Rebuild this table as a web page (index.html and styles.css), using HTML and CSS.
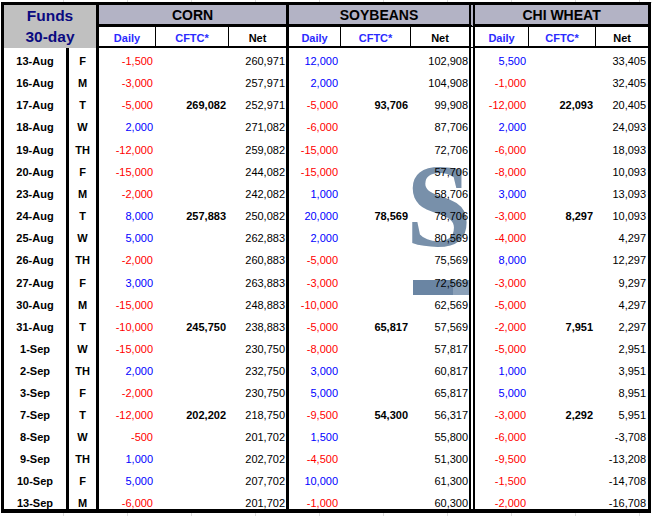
FILE: index.html
```html
<!DOCTYPE html>
<html>
<head>
<meta charset="utf-8">
<title>Funds 30-day</title>
<link rel="stylesheet" href="styles.css">
</head>
<body>
<div class="sheet">
  <div class="mark" aria-hidden="true"><span class="mark-s">S</span><span class="mark-bar"></span></div>
  <table class="funds">
    <colgroup>
      <col class="c-date"><col class="c-day">
      <col class="c-corn-d"><col class="c-corn-c"><col class="c-corn-n">
      <col class="c-soy-d"><col class="c-soy-c"><col class="c-soy-n">
      <col class="c-wh-d"><col class="c-wh-c"><col class="c-wh-n">
    </colgroup>
    <thead>
      <tr class="r-group">
        <th class="title" rowspan="2" colspan="2">Funds<br>30-day</th>
        <th class="grp end-corn" colspan="3">CORN</th>
        <th class="grp end-soy" colspan="3">SOYBEANS</th>
        <th class="grp" colspan="3">CHI WHEAT</th>
      </tr>
      <tr class="r-sub">
        <th class="sub blue sep">Daily</th><th class="sub blue sep">CFTC*</th><th class="sub end-corn">Net</th>
        <th class="sub blue sep">Daily</th><th class="sub blue sep">CFTC*</th><th class="sub end-soy">Net</th>
        <th class="sub blue sep">Daily</th><th class="sub blue sep">CFTC*</th><th class="sub">Net</th>
      </tr>
    </thead>
    <tbody>
      <tr><td class="date">13-Aug</td><td class="day">F</td><td class="d neg">-1,500</td><td class="c"></td><td class="n end-corn">260,971</td><td class="d pos">12,000</td><td class="c"></td><td class="n end-soy">102,908</td><td class="d pos">5,500</td><td class="c"></td><td class="n wn">33,405</td></tr>
      <tr><td class="date">16-Aug</td><td class="day">M</td><td class="d neg">-3,000</td><td class="c"></td><td class="n end-corn">257,971</td><td class="d pos">2,000</td><td class="c"></td><td class="n end-soy">104,908</td><td class="d neg">-1,000</td><td class="c"></td><td class="n wn">32,405</td></tr>
      <tr><td class="date">17-Aug</td><td class="day">T</td><td class="d neg">-5,000</td><td class="c">269,082</td><td class="n end-corn">252,971</td><td class="d neg">-5,000</td><td class="c">93,706</td><td class="n end-soy">99,908</td><td class="d neg">-12,000</td><td class="c">22,093</td><td class="n wn">20,405</td></tr>
      <tr><td class="date">18-Aug</td><td class="day">W</td><td class="d pos">2,000</td><td class="c"></td><td class="n end-corn">271,082</td><td class="d neg">-6,000</td><td class="c"></td><td class="n end-soy">87,706</td><td class="d pos">2,000</td><td class="c"></td><td class="n wn">24,093</td></tr>
      <tr class="tall"><td class="date">19-Aug</td><td class="day">TH</td><td class="d neg">-12,000</td><td class="c"></td><td class="n end-corn">259,082</td><td class="d neg">-15,000</td><td class="c"></td><td class="n end-soy">72,706</td><td class="d neg">-6,000</td><td class="c"></td><td class="n wn">18,093</td></tr>
      <tr><td class="date">20-Aug</td><td class="day">F</td><td class="d neg">-15,000</td><td class="c"></td><td class="n end-corn">244,082</td><td class="d neg">-15,000</td><td class="c"></td><td class="n end-soy">57,706</td><td class="d neg">-8,000</td><td class="c"></td><td class="n wn">10,093</td></tr>
      <tr><td class="date">23-Aug</td><td class="day">M</td><td class="d neg">-2,000</td><td class="c"></td><td class="n end-corn">242,082</td><td class="d pos">1,000</td><td class="c"></td><td class="n end-soy">58,706</td><td class="d pos">3,000</td><td class="c"></td><td class="n wn">13,093</td></tr>
      <tr><td class="date">24-Aug</td><td class="day">T</td><td class="d pos">8,000</td><td class="c">257,883</td><td class="n end-corn">250,082</td><td class="d pos">20,000</td><td class="c">78,569</td><td class="n end-soy">78,706</td><td class="d neg">-3,000</td><td class="c">8,297</td><td class="n wn">10,093</td></tr>
      <tr><td class="date">25-Aug</td><td class="day">W</td><td class="d pos">5,000</td><td class="c"></td><td class="n end-corn">262,883</td><td class="d pos">2,000</td><td class="c"></td><td class="n end-soy">80,569</td><td class="d neg">-4,000</td><td class="c"></td><td class="n wn">4,297</td></tr>
      <tr><td class="date">26-Aug</td><td class="day">TH</td><td class="d neg">-2,000</td><td class="c"></td><td class="n end-corn">260,883</td><td class="d neg">-5,000</td><td class="c"></td><td class="n end-soy">75,569</td><td class="d pos">8,000</td><td class="c"></td><td class="n wn">12,297</td></tr>
      <tr class="tall"><td class="date">27-Aug</td><td class="day">F</td><td class="d pos">3,000</td><td class="c"></td><td class="n end-corn">263,883</td><td class="d neg">-3,000</td><td class="c"></td><td class="n end-soy">72,569</td><td class="d neg">-3,000</td><td class="c"></td><td class="n wn">9,297</td></tr>
      <tr><td class="date">30-Aug</td><td class="day">M</td><td class="d neg">-15,000</td><td class="c"></td><td class="n end-corn">248,883</td><td class="d neg">-10,000</td><td class="c"></td><td class="n end-soy">62,569</td><td class="d neg">-5,000</td><td class="c"></td><td class="n wn">4,297</td></tr>
      <tr><td class="date">31-Aug</td><td class="day">T</td><td class="d neg">-10,000</td><td class="c">245,750</td><td class="n end-corn">238,883</td><td class="d neg">-5,000</td><td class="c">65,817</td><td class="n end-soy">57,569</td><td class="d neg">-2,000</td><td class="c">7,951</td><td class="n wn">2,297</td></tr>
      <tr><td class="date">1-Sep</td><td class="day">W</td><td class="d neg">-15,000</td><td class="c"></td><td class="n end-corn">230,750</td><td class="d neg">-8,000</td><td class="c"></td><td class="n end-soy">57,817</td><td class="d neg">-5,000</td><td class="c"></td><td class="n wn">2,951</td></tr>
      <tr><td class="date">2-Sep</td><td class="day">TH</td><td class="d pos">2,000</td><td class="c"></td><td class="n end-corn">232,750</td><td class="d pos">3,000</td><td class="c"></td><td class="n end-soy">60,817</td><td class="d pos">1,000</td><td class="c"></td><td class="n wn">3,951</td></tr>
      <tr><td class="date">3-Sep</td><td class="day">F</td><td class="d neg">-2,000</td><td class="c"></td><td class="n end-corn">230,750</td><td class="d pos">5,000</td><td class="c"></td><td class="n end-soy">65,817</td><td class="d pos">5,000</td><td class="c"></td><td class="n wn">8,951</td></tr>
      <tr><td class="date">7-Sep</td><td class="day">T</td><td class="d neg">-12,000</td><td class="c">202,202</td><td class="n end-corn">218,750</td><td class="d neg">-9,500</td><td class="c">54,300</td><td class="n end-soy">56,317</td><td class="d neg">-3,000</td><td class="c">2,292</td><td class="n wn">5,951</td></tr>
      <tr><td class="date">8-Sep</td><td class="day">W</td><td class="d neg">-500</td><td class="c"></td><td class="n end-corn">201,702</td><td class="d pos">1,500</td><td class="c"></td><td class="n end-soy">55,800</td><td class="d neg">-6,000</td><td class="c"></td><td class="n wn">-3,708</td></tr>
      <tr><td class="date">9-Sep</td><td class="day">TH</td><td class="d pos">1,000</td><td class="c"></td><td class="n end-corn">202,702</td><td class="d neg">-4,500</td><td class="c"></td><td class="n end-soy">51,300</td><td class="d neg">-9,500</td><td class="c"></td><td class="n wn">-13,208</td></tr>
      <tr><td class="date">10-Sep</td><td class="day">F</td><td class="d pos">5,000</td><td class="c"></td><td class="n end-corn">207,702</td><td class="d pos">10,000</td><td class="c"></td><td class="n end-soy">61,300</td><td class="d neg">-1,500</td><td class="c"></td><td class="n wn">-14,708</td></tr>
      <tr class="last"><td class="date">13-Sep</td><td class="day">M</td><td class="d neg">-6,000</td><td class="c"></td><td class="n end-corn">201,702</td><td class="d neg">-1,000</td><td class="c"></td><td class="n end-soy">60,300</td><td class="d neg">-2,000</td><td class="c"></td><td class="n wn">-16,708</td></tr>
    </tbody>
  </table>
</div>
</body>
</html>
```

FILE: styles.css
```css
html, body {
  margin: 0;
  padding: 0;
  height: 100%;
}

body {
  background-color: #ffffff;
  background-image:
    linear-gradient(#d6d6d6, #d6d6d6),
    repeating-linear-gradient(to right, transparent 0 63px, #dcdcdc 63px 64px);
  background-repeat: no-repeat, repeat;
  background-position: 475px 2px, 0 0;
  background-size: 177px 1px, auto;
  font-family: "Liberation Sans", Arial, sans-serif;
  overflow: hidden;
}

.sheet {
  position: relative;
  z-index: 0;
  display: inline-block;
  vertical-align: top;
  margin: 2px 0 0 1px;
  background: #ffffff;
}

.mark {
  position: absolute;
  inset: 0;
  z-index: -1;
  pointer-events: none;
}

.mark-s {
  position: absolute;
  left: 405px;
  top: 146px;
  font-family: "Liberation Serif", "Times New Roman", serif;
  font-weight: bold;
  font-size: 118px;
  line-height: 118px;
  color: #7890aa;
}

.mark-bar {
  position: absolute;
  left: 412px;
  top: 278px;
  width: 57px;
  height: 15px;
  background: linear-gradient(to right, #6a85a3 0 70%, #8aa0b8 70% 100%);
}

.funds {
  table-layout: fixed;
  width: 650px;
  border-collapse: separate;
  border-spacing: 0;
  border-style: solid;
  border-color: #000;
  border-width: 3px 3px 4px 3px;
  background: transparent;
  font-size: 11px;
  color: #000;
}

.c-date { width: 65px; }
.c-day { width: 30px; }
.c-corn-d { width: 57px; }
.c-corn-c { width: 73px; }
.c-corn-n { width: 60px; }
.c-soy-d { width: 52px; }
.c-soy-c { width: 70px; }
.c-soy-n { width: 64px; }
.c-wh-d { width: 54px; }
.c-wh-c { width: 67px; }
.c-wh-n { width: 52px; }

.funds th {
  font-weight: bold;
  text-align: center;
  white-space: nowrap;
  vertical-align: top;
}

.title {
  background: #c0c0c0;
  color: #0a0a80;
  font-size: 15.5px;
  line-height: 21px;
  padding: 0 0 1px;
  border-right: 3px solid #000;
}

.grp {
  background: #b3b3c5;
  font-size: 14px;
  line-height: 17px;
  padding: 2px 0 0;
  border-bottom: 3px solid #000;
}

.sub {
  background: #fff;
  font-size: 11px;
  line-height: 15px;
  padding: 4px 0 0;
  border-bottom: 2px solid #000;
}

.sep { border-right: 1px solid #000; }
.blue { color: #2b2bff; }

.end-corn { border-right: 3px solid #000; }
.end-soy { border-right: 6px double #000; }

.funds td {
  padding: 7px 3px 2px 0;
  line-height: 13px;
  vertical-align: top;
  text-align: right;
  white-space: nowrap;
  overflow: visible;
}

.funds tr.tall td {
  padding-top: 8px;
}

.funds td.date {
  font-weight: bold;
  text-align: center;
  padding-right: 0;
  border-right: 3px solid #000;
}

.funds td.day {
  font-weight: bold;
  text-align: center;
  padding-right: 0;
  border-right: 3px solid #000;
}

.funds td.c { font-weight: bold; }
.funds td.n { padding-right: 1px; }
.funds td.wn { padding-right: 2px; }

.neg { color: #ff0000; }
.pos { color: #0000ff; }

.funds tr.last td {
  line-height: 12px;
  padding-bottom: 0;
}
```
